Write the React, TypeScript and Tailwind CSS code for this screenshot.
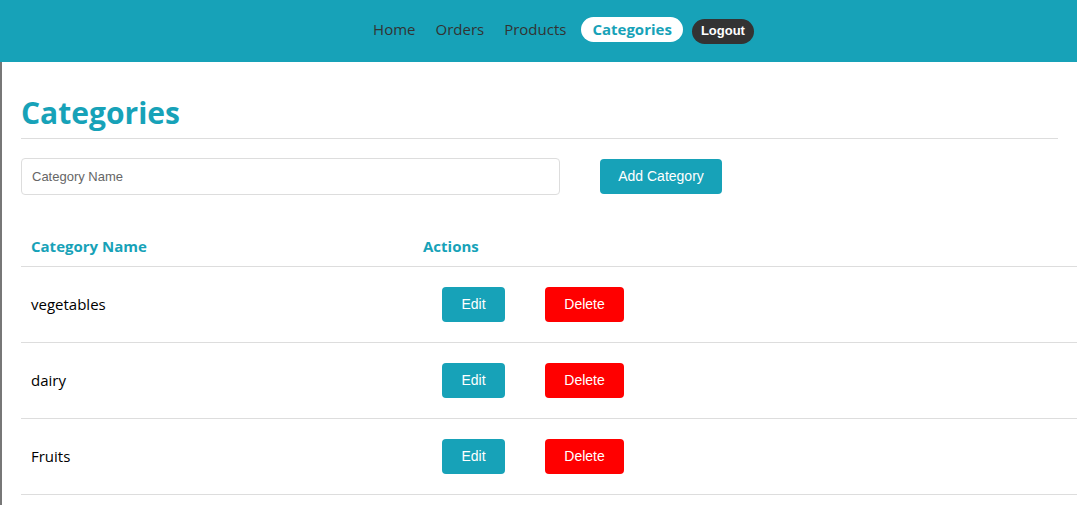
const categories = ["vegetables", "dairy", "Fruits"];

const App = () => {
  return (
    <div className="min-h-screen bg-white font-['Open_Sans',sans-serif]">
      {/* Top navigation */}
      <nav className="h-[62px] bg-[#17a2b8] flex items-center justify-center">
        <div className="flex items-center gap-5 text-[15px] text-[#333] ml-[50px] -mt-[4px]">
          <a className="cursor-pointer">Home</a>
          <a className="cursor-pointer">Orders</a>
          <a className="cursor-pointer">Products</a>
          <a className="cursor-pointer -ml-[5px] bg-white text-[#17a2b8] font-bold rounded-full px-[11px] h-[25px] flex items-center">
            Categories
          </a>
          <button className="-ml-[11px] mt-[4px] bg-[#333] text-white font-['Liberation_Sans',sans-serif] font-bold text-[13px] rounded-full px-[9px] h-[25px]">
            Logout
          </button>
        </div>
      </nav>

      <main className="border-l-2 border-[#777] pl-[19px] pt-[31px] min-h-[443px]">
        <h2 className="text-[30px] font-bold text-[#17a2b8] leading-[40px] mr-[19px] pb-[5px] border-b border-[#ddd]">
          Categories
        </h2>

        <div className="flex items-center mt-[19px]">
          <input
            placeholder="Category Name"
            className="w-[539px] h-[37px] px-[10px] border border-[#ddd] rounded-[4px] text-[13px] font-['Liberation_Sans',sans-serif] placeholder:text-[#666] outline-none"
          />
          <button className="ml-[40px] w-[122px] h-[35px] bg-[#17a2b8] text-white rounded-[4px] text-[14px] font-['Liberation_Sans',sans-serif]">
            Add Category
          </button>
        </div>

        <table className="mt-[31px] w-full border-collapse text-[15px]">
          <thead>
            <tr className="border-b border-[#ddd]">
              <th className="w-[392px] text-left px-[10px] h-[40px] text-[#17a2b8] font-bold">
                Category Name
              </th>
              <th className="text-left px-[10px] text-[#17a2b8] font-bold">Actions</th>
            </tr>
          </thead>
          <tbody>
            {categories.map((c) => (
              <tr key={c} className="border-b border-[#ddd] h-[76px]">
                <td className="px-[10px] text-black">{c}</td>
                <td className="px-[10px]">
                  <div className="flex items-center ml-[19px] gap-[40px] font-['Liberation_Sans',sans-serif] text-[14px] text-white">
                    <button className="w-[63px] h-[35px] bg-[#17a2b8] rounded-[4px]">Edit</button>
                    <button className="w-[79px] h-[35px] bg-[#ff0000] rounded-[4px]">Delete</button>
                  </div>
                </td>
              </tr>
            ))}
          </tbody>
        </table>
      </main>
    </div>
  );
};

export default App;
